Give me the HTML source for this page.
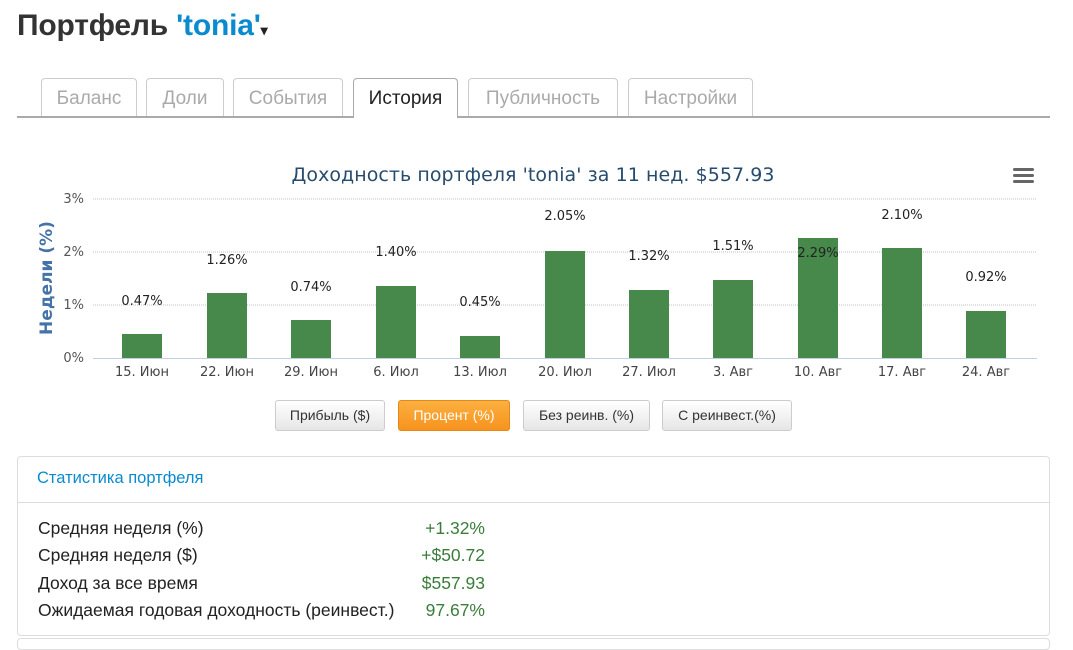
<!DOCTYPE html>
<html><head><meta charset="utf-8"><style>
body{margin:0;width:1073px;height:642px;overflow:hidden;background:#fff;font-family:"Liberation Sans",Arial,sans-serif;position:relative}
.a{position:absolute}
h1{position:absolute;left:17px;top:9px;margin:0;font-size:30px;font-weight:bold;color:#333;letter-spacing:-0.2px}
h1 span{color:#0a8acf}
.tab{position:absolute;top:78px;height:38px;border:1px solid #ccc;border-bottom:none;border-radius:4px 4px 0 0;color:#aaa;font-size:19px;line-height:40px;text-align:center;box-sizing:border-box}
.tab.act{color:#222;border-color:#aaa;background:#fff;height:40px;z-index:2}
.btn{position:absolute;top:400px;height:31px;border:1px solid #ccc;border-radius:3px;background:linear-gradient(#fff,#e6e6e6);font-size:14px;line-height:29px;text-align:center;color:#333;box-sizing:border-box}
.btn.on{background:linear-gradient(#fbb040,#f7931e);border-color:#e38a14;color:#fff}
.row{position:absolute;left:38px;font-size:17.5px;color:#222}
.val{position:absolute;right:588px;font-size:17.5px;color:#3a7d3a;text-align:right}
</style></head><body>
<h1>Портфель <span>'tonia'</span><span style="color:#222;font-size:14px">▾</span></h1>
<div class="a" style="left:17px;top:116px;width:1033px;height:2px;background:#aaa"></div>
<div class="tab" style="left:41px;width:96px">Баланс</div>
<div class="tab" style="left:146px;width:78px">Доли</div>
<div class="tab" style="left:233px;width:110px">События</div>
<div class="tab act" style="left:353px;width:105px">История</div>
<div class="tab" style="left:468px;width:150px">Публичность</div>
<div class="tab" style="left:628px;width:125px">Настройки</div>

<svg class="a" style="left:0;top:140px" width="1073" height="250" font-family="DejaVu Sans,sans-serif">
<text x="533" y="41" text-anchor="middle" font-size="19" fill="#274b6d" textLength="483">Доходность портфеля 'tonia' за 11 нед. $557.93</text>
<g fill="#666"><rect x="1013" y="28" width="21" height="3" rx="1.5"/><rect x="1013" y="34" width="21" height="3" rx="1.5"/><rect x="1013" y="40" width="21" height="3" rx="1.5"/></g>
<g stroke="#c0c0c0" stroke-dasharray="1,1"><line x1="93" x2="1037" y1="59" y2="59"/><line x1="93" x2="1037" y1="112" y2="112"/><line x1="93" x2="1037" y1="165" y2="165"/></g>
<line x1="93" x2="1037" y1="218.5" y2="218.5" stroke="#c0d0e0"/>
<g font-size="13" fill="#555" text-anchor="end"><text x="84" y="63">3%</text><text x="84" y="116">2%</text><text x="84" y="169">1%</text><text x="84" y="222">0%</text></g>
<text transform="translate(52,138) rotate(-90)" text-anchor="middle" font-size="17" font-weight="bold" fill="#4572a7">Недели (%)</text>
<g fill="#46894a">
<rect x="122" y="194" width="40" height="24"/><rect x="207" y="153" width="40" height="65"/><rect x="291" y="180" width="40" height="38"/><rect x="376" y="146" width="40" height="72"/><rect x="460" y="196" width="40" height="22"/><rect x="545" y="111" width="40" height="107"/><rect x="629" y="150" width="40" height="68"/><rect x="713" y="140" width="40" height="78"/><rect x="798" y="98" width="40" height="120"/><rect x="882" y="108" width="40" height="110"/><rect x="966" y="171" width="40" height="47"/>
</g>
<g font-size="13" fill="#222" text-anchor="middle">
<text x="142" y="165">0.47%</text><text x="227" y="124">1.26%</text><text x="311" y="151">0.74%</text><text x="396" y="116">1.40%</text><text x="480" y="166">0.45%</text><text x="565" y="80">2.05%</text><text x="649" y="120">1.32%</text><text x="733" y="110">1.51%</text><text x="818" y="117">2.29%</text><text x="902" y="79">2.10%</text><text x="986" y="141">0.92%</text>
</g>
<g font-size="13" fill="#444" text-anchor="middle">
<text x="142" y="236">15. Июн</text><text x="227" y="236">22. Июн</text><text x="311" y="236">29. Июн</text><text x="396" y="236">6. Июл</text><text x="480" y="236">13. Июл</text><text x="565" y="236">20. Июл</text><text x="649" y="236">27. Июл</text><text x="733" y="236">3. Авг</text><text x="818" y="236">10. Авг</text><text x="902" y="236">17. Авг</text><text x="986" y="236">24. Авг</text>
</g>
</svg>

<div class="btn" style="left:275px;width:110px">Прибыль ($)</div>
<div class="btn on" style="left:398px;width:112px">Процент (%)</div>
<div class="btn" style="left:523px;width:127px">Без реинв. (%)</div>
<div class="btn" style="left:662px;width:130px">С реинвест.(%)</div>

<div class="a" style="left:17px;top:456px;width:1031px;height:178px;border:1px solid #ddd;border-radius:4px"></div>
<div class="a" style="left:18px;top:502px;width:1031px;height:1px;background:#ddd"></div>
<div class="a" style="left:37px;top:469px;font-size:16.5px;color:#0a8acf">Статистика портфеля</div>
<div class="a" style="left:17px;top:638px;width:1031px;height:10px;border:1px solid #ddd;border-radius:4px"></div>
<div class="row" style="top:518px">Средняя неделя (%)</div><div class="val" style="top:518px">+1.32%</div>
<div class="row" style="top:545px">Средняя неделя ($)</div><div class="val" style="top:545px">+$50.72</div>
<div class="row" style="top:573px">Доход за все время</div><div class="val" style="top:573px">$557.93</div>
<div class="row" style="top:600px">Ожидаемая годовая доходность (реинвест.)</div><div class="val" style="top:600px">97.67%</div>
</body></html>
